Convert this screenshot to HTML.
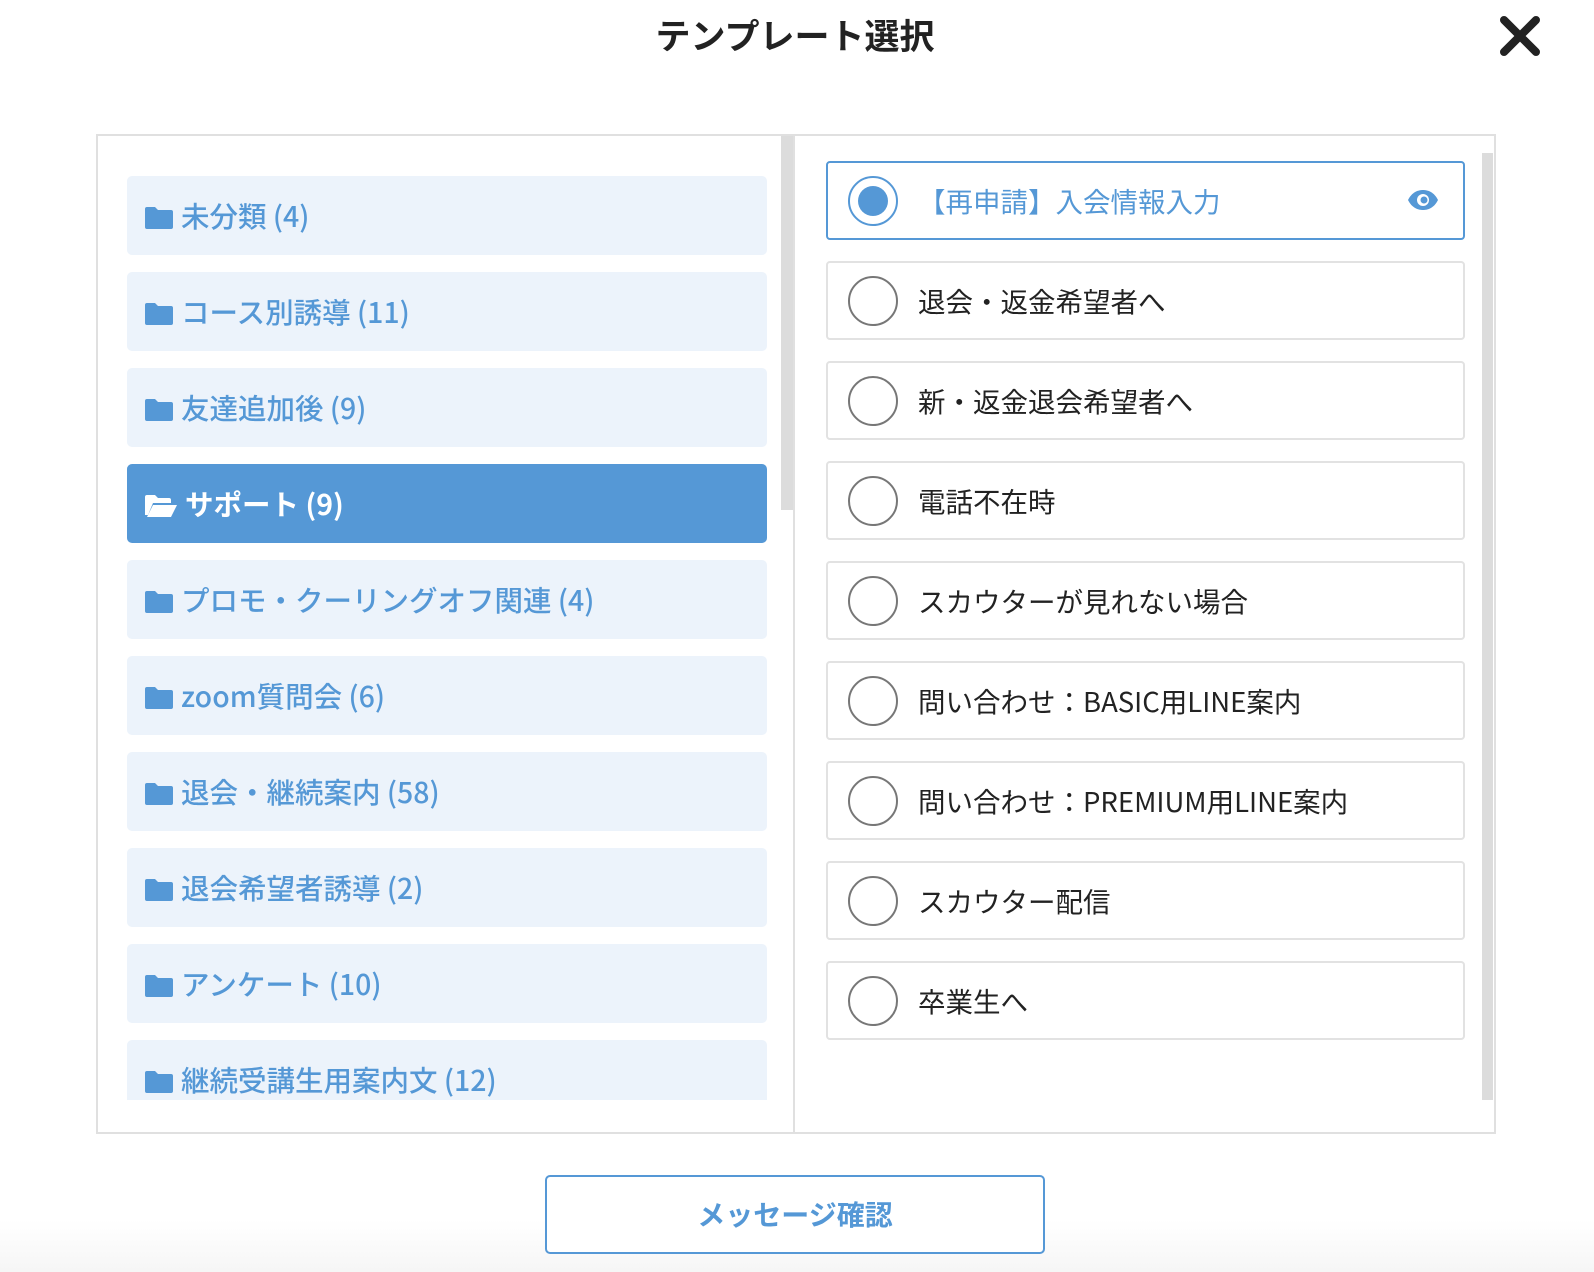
<!DOCTYPE html>
<html><head><meta charset="utf-8"><style>
*{box-sizing:border-box;margin:0;padding:0}
body{width:1594px;height:1272px;overflow:hidden;position:relative;background:linear-gradient(#fff 0,#fff 1220px,#f6f6f6 1272px);font-family:"Noto Sans CJK JP","Liberation Sans",sans-serif}
.title{position:absolute;top:10px;left:0;width:1590px;text-align:center;font-size:35px;font-weight:bold;color:#222;line-height:50px}
.close{position:absolute;left:1498px;top:14px}
.box{position:absolute;left:96px;top:134px;width:1400px;height:1000px;border:2px solid #e0e0e0;background:#fff}
.div{position:absolute;left:793px;top:134px;width:2px;height:1000px;background:#e0e0e0}
.sb1{position:absolute;left:781px;top:136px;width:12px;height:374px;background:#dcdcdc}
.sb2{position:absolute;left:1482px;top:153px;width:11px;height:947px;background:#dcdcdc}
.lclip{position:absolute;left:0;top:0;width:780px;height:1100px;overflow:hidden}
.li{position:absolute;left:127px;width:640px;height:79px;background:#ecf3fb;border-radius:5px;color:#5598d6;font-size:28.5px;line-height:79px;padding-left:18px;white-space:nowrap;font-weight:500}
.li svg{vertical-align:-2px;margin-right:8px}
.li.on{background:#5598d6;color:#fff;font-weight:bold}
.ri{position:absolute;left:826px;width:639px;height:79px;border:2px solid #e2e2e2;border-radius:4px;background:#fff;font-size:27.5px;line-height:75px;color:#222;padding-left:90px;white-space:nowrap}
.ri .r{position:absolute;left:20px;top:13px;width:50px;height:50px;border:2px solid #777;border-radius:50%}
.ri.on{border-color:#5598d6;color:#5598d6}
.ri.on .r{border-color:#5598d6}
.ri.on .r:after{content:"";position:absolute;left:8px;top:8px;width:30px;height:30px;border-radius:50%;background:#5598d6}
.btn{position:absolute;left:545px;top:1175px;width:500px;height:79px;border:2px solid #5598d6;border-radius:5px;background:#fff;color:#5598d6;font-weight:bold;font-size:28px;text-align:center;line-height:75px}
</style></head><body>
<div class="title">テンプレート選択</div>
<svg class="close" width="44" height="44" viewBox="0 0 44 44"><path d="M6 6L38 38M38 6L6 38" stroke="#222" stroke-width="8" stroke-linecap="round"/></svg>
<div class="box"></div>
<div class="div"></div>
<div class="sb1"></div>
<div class="sb2"></div>
<div class="lclip">
<div class="li" style="top:176px"><svg width="28" height="22" viewBox="0 0 28 22"><path d="M0 2a2 2 0 0 1 2-2h8l3 3h13a2 2 0 0 1 2 2v15a2 2 0 0 1-2 2H2a2 2 0 0 1-2-2z" fill="#5598d6"/></svg>未分類 (4)</div>
<div class="li" style="top:272px"><svg width="28" height="22" viewBox="0 0 28 22"><path d="M0 2a2 2 0 0 1 2-2h8l3 3h13a2 2 0 0 1 2 2v15a2 2 0 0 1-2 2H2a2 2 0 0 1-2-2z" fill="#5598d6"/></svg>コース別誘導 (11)</div>
<div class="li" style="top:368px"><svg width="28" height="22" viewBox="0 0 28 22"><path d="M0 2a2 2 0 0 1 2-2h8l3 3h13a2 2 0 0 1 2 2v15a2 2 0 0 1-2 2H2a2 2 0 0 1-2-2z" fill="#5598d6"/></svg>友達追加後 (9)</div>
<div class="li on" style="top:464px"><svg width="32" height="22" viewBox="0 0 32 22"><path d="M0 2a2 2 0 0 1 2-2h8l3 3h11a2 2 0 0 1 2 2v3H8L3 20H0z" fill="#fff"/><path d="M8 10h24l-6 12H2z" fill="#fff"/></svg>サポート (9)</div>
<div class="li" style="top:560px"><svg width="28" height="22" viewBox="0 0 28 22"><path d="M0 2a2 2 0 0 1 2-2h8l3 3h13a2 2 0 0 1 2 2v15a2 2 0 0 1-2 2H2a2 2 0 0 1-2-2z" fill="#5598d6"/></svg>プロモ・クーリングオフ関連 (4)</div>
<div class="li" style="top:656px"><svg width="28" height="22" viewBox="0 0 28 22"><path d="M0 2a2 2 0 0 1 2-2h8l3 3h13a2 2 0 0 1 2 2v15a2 2 0 0 1-2 2H2a2 2 0 0 1-2-2z" fill="#5598d6"/></svg>zoom質問会 (6)</div>
<div class="li" style="top:752px"><svg width="28" height="22" viewBox="0 0 28 22"><path d="M0 2a2 2 0 0 1 2-2h8l3 3h13a2 2 0 0 1 2 2v15a2 2 0 0 1-2 2H2a2 2 0 0 1-2-2z" fill="#5598d6"/></svg>退会・継続案内 (58)</div>
<div class="li" style="top:848px"><svg width="28" height="22" viewBox="0 0 28 22"><path d="M0 2a2 2 0 0 1 2-2h8l3 3h13a2 2 0 0 1 2 2v15a2 2 0 0 1-2 2H2a2 2 0 0 1-2-2z" fill="#5598d6"/></svg>退会希望者誘導 (2)</div>
<div class="li" style="top:944px"><svg width="28" height="22" viewBox="0 0 28 22"><path d="M0 2a2 2 0 0 1 2-2h8l3 3h13a2 2 0 0 1 2 2v15a2 2 0 0 1-2 2H2a2 2 0 0 1-2-2z" fill="#5598d6"/></svg>アンケート (10)</div>
<div class="li" style="top:1040px"><svg width="28" height="22" viewBox="0 0 28 22"><path d="M0 2a2 2 0 0 1 2-2h8l3 3h13a2 2 0 0 1 2 2v15a2 2 0 0 1-2 2H2a2 2 0 0 1-2-2z" fill="#5598d6"/></svg>継続受講生用案内文 (12)</div>
</div>
<div class="ri on" style="top:161px"><span class="r"></span>【再申請】入会情報入力<svg style="position:absolute;right:24px;top:26px" width="32" height="22" viewBox="0 0 32 22"><path d="M1 11C5 3 11 1 16 1s11 2 15 10c-4 8-10 10-15 10S5 19 1 11z" fill="#5598d6"/><circle cx="16" cy="11" r="6" fill="#fff"/><circle cx="17" cy="11" r="3.5" fill="#5598d6"/></svg></div>
<div class="ri" style="top:261px"><span class="r"></span>退会・返金希望者へ</div>
<div class="ri" style="top:361px"><span class="r"></span>新・返金退会希望者へ</div>
<div class="ri" style="top:461px"><span class="r"></span>電話不在時</div>
<div class="ri" style="top:561px"><span class="r"></span>スカウターが見れない場合</div>
<div class="ri" style="top:661px"><span class="r"></span>問い合わせ：BASIC用LINE案内</div>
<div class="ri" style="top:761px"><span class="r"></span>問い合わせ：PREMIUM用LINE案内</div>
<div class="ri" style="top:861px"><span class="r"></span>スカウター配信</div>
<div class="ri" style="top:961px"><span class="r"></span>卒業生へ</div>
<div class="btn">メッセージ確認</div>
</body></html>
